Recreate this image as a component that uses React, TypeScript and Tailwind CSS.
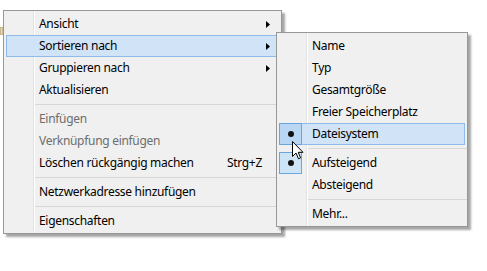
import React from "react";

const font = {
  fontFamily: '"Segoe UI", "Noto Sans", "Liberation Sans", sans-serif',
  letterSpacing: "-0.3px",
};

function Arrow() {
  return (
    <svg width="4" height="7" viewBox="0 0 4 7" className="ml-auto mr-[8px] shrink-0">
      <path d="M0 0 L4 3.5 L0 7 Z" fill="#000" />
    </svg>
  );
}

type Item = {
  label: string;
  arrow?: boolean;
  disabled?: boolean;
  hl?: boolean;
  shortcut?: string;
  checked?: boolean;
};

function Row({ it }: { it: Item }) {
  return (
    <div
      className={`h-[22px] mx-[2px] flex items-center border ${
        it.hl ? "bg-[#d1e3f6] border-[#8fbbe8]" : "border-transparent"
      }`}
    >
      <div className="w-[24px] self-stretch flex">
        {it.checked && (
          <div
            className={`-ml-px -my-px w-[23px] h-[22px] border border-[#6aa7e0] flex items-center justify-center ${
              it.hl ? "bg-[#b9d7f2]" : "bg-[#cde3f6]"
            }`}
          >
            <div className="w-[6px] h-[6px] rounded-full bg-[#111]" />
          </div>
        )}
      </div>
      <span
        className={`ml-[8px] text-[12px] whitespace-nowrap ${
          it.disabled ? "text-[#6d6d6d]" : "text-black"
        }`}
      >
        {it.label}
      </span>
      {it.shortcut && (
        <span className="ml-auto mr-[16px] text-[12px] text-black">{it.shortcut}</span>
      )}
      {it.arrow && <Arrow />}
    </div>
  );
}

function Sep() {
  return (
    <div className="h-[7px] flex items-center pl-[31px]">
      <div className="h-px bg-[#d7d7d7] flex-1" />
    </div>
  );
}

function Menu({ groups, className }: { groups: Item[][]; className: string }) {
  return (
    <div
      className={`absolute bg-[#f0f0f0] border border-[#979797] shadow-[3px_3px_2px_rgba(0,0,0,0.35)] ${className}`}
    >
      <div className="absolute left-[29px] top-0 bottom-0 w-px bg-[#e2e2e2]" />
      <div className="absolute left-[30px] top-0 bottom-0 w-px bg-white" />
      <div className="relative flex flex-col pt-[2px] pb-[1px]">
        {groups.map((g, gi) => (
          <React.Fragment key={gi}>
            {gi > 0 && <Sep />}
            {g.map((it) => (
              <Row key={it.label} it={it} />
            ))}
          </React.Fragment>
        ))}
      </div>
    </div>
  );
}

export default function App() {
  const main: Item[][] = [
    [
      { label: "Ansicht", arrow: true },
      { label: "Sortieren nach", arrow: true, hl: true },
      { label: "Gruppieren nach", arrow: true },
      { label: "Aktualisieren" },
    ],
    [
      { label: "Einfügen", disabled: true },
      { label: "Verknüpfung einfügen", disabled: true },
      { label: "Löschen rückgängig machen", shortcut: "Strg+Z" },
    ],
    [{ label: "Netzwerkadresse hinzufügen" }],
    [{ label: "Eigenschaften" }],
  ];
  const sub: Item[][] = [
    [
      { label: "Name" },
      { label: "Typ" },
      { label: "Gesamtgröße" },
      { label: "Freier Speicherplatz" },
      { label: "Dateisystem", checked: true, hl: true },
    ],
    [{ label: "Aufsteigend", checked: true }, { label: "Absteigend" }],
    [{ label: "Mehr..." }],
  ];
  return (
    <div className="relative w-[487px] h-[271px] bg-white overflow-hidden" style={font}>
      <div className="absolute left-0 top-[27px] w-[3px] h-[8px] bg-[#e8dcc0] border border-[#c8b890]" />
      <Menu groups={main} className="left-[3px] top-[10px] w-[279px]" />
      <Menu groups={sub} className="left-[276px] top-[32px] w-[192px]" />
      {/* Cursor */}
      <svg className="absolute left-[292px] top-[141px]" width="12" height="19" viewBox="0 0 12 19">
        <path
          d="M0.5 0.5 L0.5 15.5 L4 12 L6.5 17.8 L8.6 16.9 L6.2 11.3 L11 11.3 Z"
          fill="#fff"
          stroke="#000"
          strokeWidth="1"
        />
      </svg>
    </div>
  );
}
